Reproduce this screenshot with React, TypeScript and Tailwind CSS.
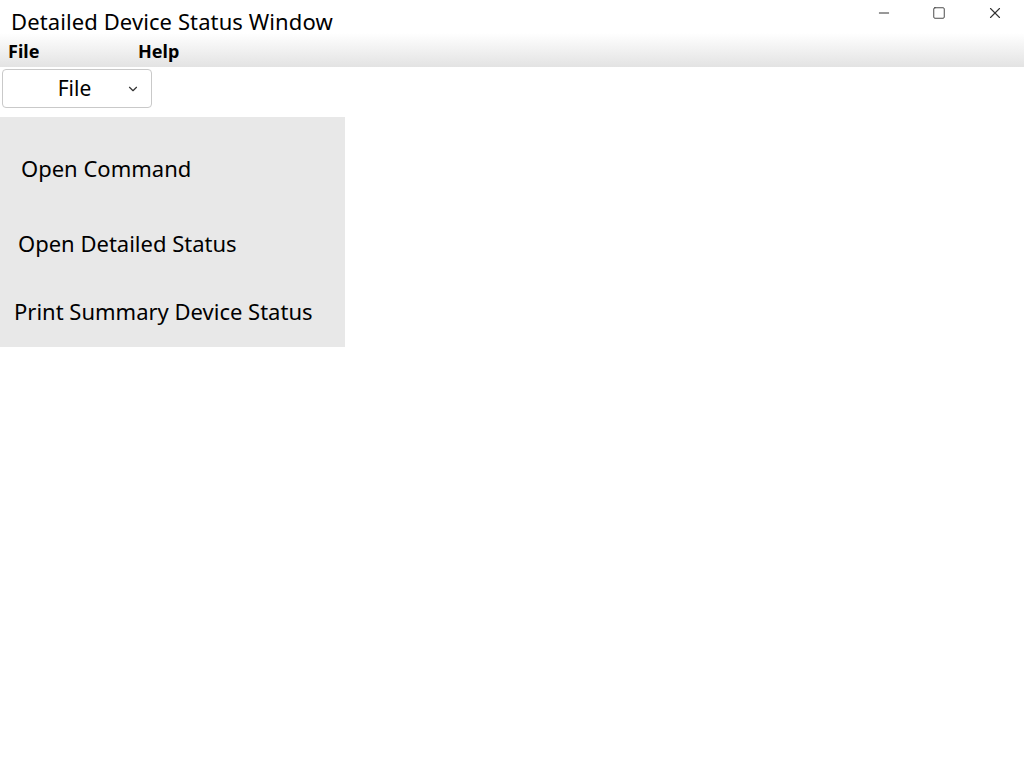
import { ChevronDown, Minus, Square, X } from "lucide-react";

const items = [
  { label: "Open Command", cls: "h-[94px] pl-[21px] pt-[8px]" },
  { label: "Open Detailed Status", cls: "h-[64px] pl-[18px]" },
  { label: "Print Summary Device Status", cls: "h-[72px] pl-[14px]" },
];

const App = () => {
  return (
    <div
      className="w-[1024px] h-[768px] bg-white text-black overflow-hidden"
      style={{ fontFamily: '"Noto Sans", "Open Sans", sans-serif' }}
    >
      {/* Title bar */}
      <div className="flex items-start h-[33px]">
        <div className="pl-[11px] pt-[6px] text-[22px] leading-[30px] flex-1 tracking-[0.1px]">
          Detailed Device Status Window
        </div>
        <div className="flex items-center gap-[40px] pr-[20px] pt-[4px] text-[#333]">
          <Minus size={16} strokeWidth={1.5} />
          <Square size={14} strokeWidth={1.5} />
          <X size={18} strokeWidth={1.5} />
        </div>
      </div>

      {/* Menu bar */}
      <div className="h-[34px] bg-gradient-to-b from-white to-[#e3e3e3] flex items-end pb-[7px] text-[18px] font-bold leading-none">
        <span className="pl-[8px] w-[138px]">File</span>
        <span>Help</span>
      </div>

      {/* Dropdown */}
      <div className="pt-[2px] pl-[2px]">
        <div className="w-[150px] h-[39px] border border-[#c9c9c9] rounded-[4px] bg-white flex items-center">
          <span className="flex-1 text-center text-[21px] pl-[20px] pt-[1px]">File</span>
          <ChevronDown size={14} strokeWidth={2} className="mr-[11px] text-[#333]" />
        </div>
      </div>

      {/* Menu panel */}
      <div className="mt-[9px] w-[345px] bg-[#e8e8e8] flex flex-col text-[22px]">
        {items.map((it) => (
          <div key={it.label} className={`flex items-center ${it.cls}`}>
            {it.label}
          </div>
        ))}
      </div>
    </div>
  );
};

export default App;
